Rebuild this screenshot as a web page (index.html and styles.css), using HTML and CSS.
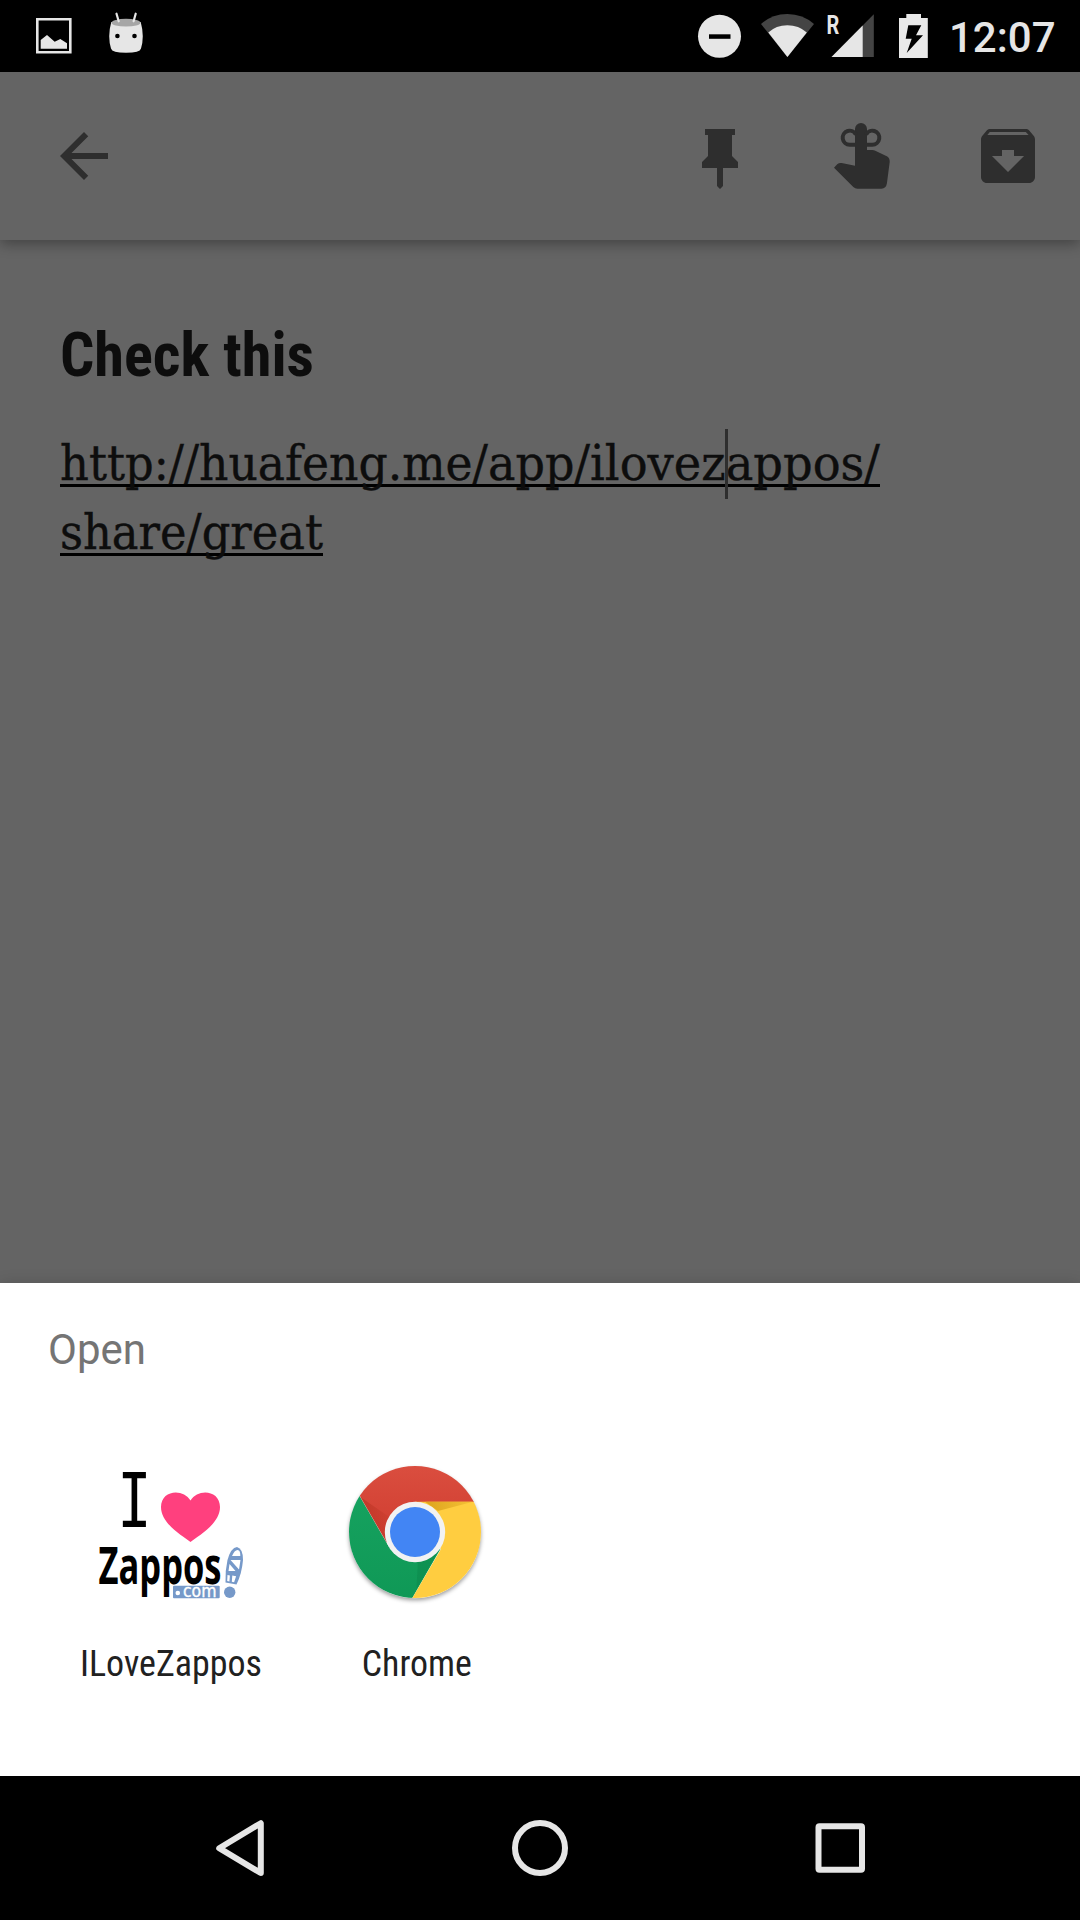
FILE: index.html
```html
<!DOCTYPE html>
<html lang="en">
<head>
<meta charset="utf-8">
<title>Open with</title>
<link rel="stylesheet" href="styles.css">
</head>
<body>
<div class="screen">
  <header class="status">
    <div class="status-left">
      <svg width="36" height="72" viewBox="36 0 36 72"><path d="M37.3 19.3h33v33h-33z" fill="none" stroke="#e6e6e6" stroke-width="2.6"/><path d="M40.7 40l6.3-5 7.7 6.7 5.6-2.7 6.7 4.3v5.4H40.7z" fill="#e6e6e6"/></svg>
      <svg width="36" height="72" viewBox="108 0 36 72"><path d="M111.3 22Q107.300 36 111 48.500Q112 52.800 126 52.800T141 48.500Q144.700 36 140.700 22z" fill="#e6e6e6"/><ellipse cx="126" cy="22.700" rx="14.500" ry="3.900" fill="#a6a6a6"/><path d="M116.500 13.700l2.200 7.600M135.700 13.700l-2.100 7.600" stroke="#e6e6e6" stroke-width="2.200" stroke-linecap="round"/><circle cx="117.400" cy="36" r="2.300"/><circle cx="134.500" cy="36" r="2.300"/></svg>
    </div>
    <div class="status-right">
      <svg width="52" height="72" viewBox="696 0 52 72"><circle cx="719.500" cy="36.300" r="21.500" fill="#e6e6e6"/><path d="M709 34.300h21.500v4.500H709z"/></svg>
      <svg width="60" height="72" viewBox="756 0 60 72"><path d="M787.400 57L761 24Q772 14 787.400 14T814 24z" fill="#444"/><path d="M787.400 57L768.300 32.600Q776 25.300 787.400 25.300T806.800 32.600z" fill="#e6e6e6"/></svg>
      <svg width="60" height="72" viewBox="824 0 60 72"><path d="M831.500 57L873.800 14.200V57z" fill="#444"/><path d="M831.500 57L862.700 25.400V57z" fill="#e6e6e6"/><text class="roaming" x="826.500" y="33.700" textLength="12.800" lengthAdjust="spacingAndGlyphs">R</text></svg>
      <svg width="44" height="72" viewBox="892 0 44 72"><path d="M899 18h7.300v-4H921v4h6.800v40H899z" fill="#e9e9e9"/><path d="M908.300 25.300h13l-5.300 10h7L906.700 53l5-14.300h-6z"/></svg>
      <time class="clock">12:07</time>
    </div>
  </header>

  <nav class="toolbar">
    <svg width="72" height="72" viewBox="0 0 24 24"><path d="M20 11H7.830l5.590-5.590L12 4l-8 8 8 8 1.410-1.410L7.830 13H20z"/></svg>
    <div class="actions">
      <svg width="72" height="72" viewBox="684 120 72 72"><path d="M705 129h30v6h-3v21l6 6v6h-15v18l-3 3-3-3v-18h-15v-6l6-6v-21h-3z"/></svg>
      <svg width="72" height="72" viewBox="828 120 72 72"><path d="M855 165.700V129a6 6 0 0 1 12 0v21h5.300q1.700 0 3 .7l12 5.900q2.600 1.700 2.400 5.400l-2.800 21.400q-.9 5-5.400 5.300h-24q-2.400 0-4.200-1.700L834 167.700l3.200-3.400q2-1.800 4.500-1.300z"/><path d="M856 144.700h-6.300a7 7 0 1 1 6.300-10M866 144.700h6.300a7 7 0 1 0-6.300-10" fill="none" stroke="#2e2e2e" stroke-width="4"/></svg>
      <svg width="72" height="72" viewBox="0 0 24 24"><path fill-rule="evenodd" d="M20.540 5.230l-1.390-1.680C18.880 3.210 18.470 3 18 3H6c-.47 0-.88.21-1.160.55L3.460 5.230C3.170 5.570 3 6.020 3 6.500V19c0 1.100.9 2 2 2h14c1.100 0 2-.9 2-2V6.500c0-.48-.17-.93-.46-1.270zM12 17.350L6.650 12H10v-2h4v2h3.350zM5.120 5l.81-1h12l.94 1z"/></svg>
    </div>
  </nav>

  <main class="note">
    <svg class="note-text" width="960" height="280" viewBox="60 310 960 280">
      <text class="note-title" x="60" y="376" textLength="254" lengthAdjust="spacingAndGlyphs">Check this</text>
      <path d="M60 484h820v3H60zM60 553h263v3H60z" fill="#000"/>
      <text class="note-link" y="480"><tspan x="60" textLength="139" lengthAdjust="spacingAndGlyphs">http://</tspan><tspan x="199" textLength="289" lengthAdjust="spacingAndGlyphs">huafeng.me/</tspan><tspan x="488" textLength="102" lengthAdjust="spacingAndGlyphs">app/</tspan><tspan x="590" textLength="290" lengthAdjust="spacingAndGlyphs">ilovezappos/</tspan></text>
      <text class="note-link" x="60" y="549" textLength="263" lengthAdjust="spacingAndGlyphs">share/great</text>
      <path d="M725 429h3v70h-3z" fill="#2e2e2e"/>
    </svg>
  </main>

  <section class="sheet">
    <h1 class="sheet-title">Open</h1>
    <div class="apps">
      <div class="app">
        <svg width="160" height="160" viewBox="91 1452 160 160">
          <text class="logo-i" transform="translate(134.500 1527) scale(.76 1)" text-anchor="middle">I</text>
          <path d="M190.500 1542C183 1536 161 1524 161 1507C161 1490 183 1488 190.500 1500.500C198 1488 220 1490 220 1507C220 1524 198 1536 190.500 1542z" fill="#ff407e"/>
          <text class="logo-name" x="98.500" y="1583.500" textLength="123" lengthAdjust="spacingAndGlyphs">Zappos</text>
          <rect x="173" y="1585.700" width="46.700" height="12.500" rx="1" fill="#7699c9"/>
          <circle cx="177.800" cy="1593" r="2.300" fill="#fff"/>
          <text class="logo-com" x="183" y="1597" textLength="33.500" lengthAdjust="spacingAndGlyphs">com</text>
          <path d="M225.500 1582.500Q225 1571 227.500 1560Q231 1547.500 237 1547Q243 1548.500 243 1560Q242 1573 236.500 1584.500z" fill="#7699c9"/>
          <path d="M232 1556q2.500-6 5.500-6t2.800 6zM230.500 1560l8.500 9.500 1.500-9.500zM229.500 1564l-1 7h7zM227.500 1575l-.3 6 2.200.4.500-6zM232.300 1575.500l-.5 6.300 2.300.4 2-6z" fill="#fff"/>
          <circle cx="229.700" cy="1592.300" r="5.700" fill="#7699c9"/>
        </svg>
        <svg class="label" width="190" height="48" viewBox="76 1640 190 48"><text x="80" y="1676" textLength="182" lengthAdjust="spacingAndGlyphs">ILoveZappos</text></svg>
      </div>
      <div class="app">
        <svg width="160" height="160" viewBox="336 1452 160 160">
          <defs>
            <clipPath id="disc"><circle cx="415" cy="1532" r="66"/></clipPath>
            <linearGradient id="red" x1="0" y1="0" x2="0" y2="1"><stop offset="0" stop-color="#db4f40"/><stop offset="1" stop-color="#cf3c2f"/></linearGradient>
            <linearGradient id="green" x1="0" y1="0" x2="0" y2="1"><stop offset="0" stop-color="#17a461"/><stop offset="1" stop-color="#0f9856"/></linearGradient>
            <linearGradient id="fold-red" x1="0" y1="0" x2="1" y2="0"><stop offset="0" stop-color="#a52714" stop-opacity=".4"/><stop offset="1" stop-color="#a52714" stop-opacity=".1"/></linearGradient>
            <linearGradient id="fold-yellow" x1="0" y1="0" x2="1" y2="0"><stop offset="0" stop-color="#dda41d"/><stop offset="1" stop-color="#f5c136"/></linearGradient>
          </defs>
          <circle class="disc-shadow" cx="415" cy="1532.500" r="65.800" fill="#fff"/>
          <g clip-path="url(#disc)">
            <path d="M345 1460h140v42H415l-28 41L345 1470z" fill="url(#red)"/>
            <path d="M345 1470L360 1496.700 389 1547 415 1532 440.500 1549 412.300 1598 410 1602h-70z" fill="url(#green)"/>
            <path d="M415 1501.800h75V1602h-79.500L412.300 1598 441 1549 415 1532z" fill="#ffcd40"/>
            <path d="M360 1496.700l29 20-3.500 25z" fill="url(#fold-red)"/>
            <path d="M425 1501.800h48L438 1511z" fill="url(#fold-yellow)"/>
            <path d="M439 1550l-21 9-1.500 30z" fill="#0a7a43" opacity=".3"/>
          </g>
          <circle cx="415" cy="1532" r="30.200" fill="#f2f2f2"/>
          <circle cx="415" cy="1532" r="25" fill="#4285f4"/>
        </svg>
        <svg class="label" width="190" height="48" viewBox="321 1640 190 48"><text x="361.800" y="1676" textLength="110" lengthAdjust="spacingAndGlyphs">Chrome</text></svg>
      </div>
    </div>
  </section>

  <footer class="navbar">
    <svg width="60" height="60" viewBox="210 1818 60 60"><path d="M260.800 1823.200v49.800L219.200 1848.200z"/></svg>
    <svg width="60" height="60" viewBox="510 1818 60 60"><circle cx="540" cy="1848" r="25"/></svg>
    <svg width="60" height="60" viewBox="810 1818 60 60"><rect x="818.500" y="1826.300" width="43.500" height="43.500" rx="1"/></svg>
  </footer>
</div>
</body>
</html>
```
FILE: styles.css
```css
body {
  margin: 0;
  background: #000;
  font-family: Roboto, "Open Sans", sans-serif;
}

svg {
  display: block;
  flex: none;
}

.screen {
  display: flex;
  flex-direction: column;
  width: 1080px;
  height: 1920px;
  overflow: hidden;
  background: #646464;
}

.status {
  display: flex;
  flex: none;
  justify-content: space-between;
  height: 72px;
  padding: 0 20px 0 36px;
  background: #000;
}

.status-left {
  display: flex;
  gap: 36px;
}

.status-right {
  display: flex;
  gap: 8px;
}

.roaming {
  font-size: 25.5px;
  font-weight: 700;
  fill: #e6e6e6;
}

.clock {
  width: 111px;
  padding-left: 5px;
  color: #e6e6e6;
  font-size: 42px;
  font-weight: 500;
  line-height: 75px;
}

.toolbar {
  display: flex;
  flex: none;
  align-items: center;
  justify-content: space-between;
  box-sizing: border-box;
  height: 168px;
  padding: 0 36px 0 48px;
  fill: #2e2e2e;
  box-shadow: 0 4px 13px rgba(0, 0, 0, 0.33);
}

.actions {
  display: flex;
  gap: 72px;
}

.note {
  flex: 1;
  padding: 70px 60px 0;
}

.note-title {
  font-size: 60.5px;
  font-weight: 700;
  font-stretch: condensed;
  fill: #0d0d0d;
}

.note-link {
  font-family: "Roboto Slab", "DejaVu Serif", serif;
  font-size: 49px;
  fill: #0d0d0d;
  stroke: #0d0d0d;
  stroke-width: 0.4px;
}

.sheet {
  flex: none;
  box-sizing: border-box;
  height: 493px;
  padding: 42px 48px 0;
  background: #fff;
  box-shadow: 0 0 14px rgba(0, 0, 0, 0.14);
}

.sheet-title {
  margin: 0;
  color: #757575;
  font-size: 42px;
  font-weight: 400;
  line-height: 50px;
}

.apps {
  display: flex;
  padding-top: 77px;
}

.app {
  display: flex;
  flex-direction: column;
  align-items: center;
  gap: 28px;
  width: 245px;
}

.label {
  font-size: 36px;
  font-stretch: condensed;
  fill: #212121;
}

.logo-i {
  font-family: "DejaVu Sans Mono", monospace;
  font-size: 75px;
}

.logo-name {
  font-family: "Open Sans", sans-serif;
  font-size: 52px;
  font-weight: 700;
}

.logo-com {
  font-family: "DejaVu Sans", sans-serif;
  font-size: 18px;
  fill: #fff;
  stroke: #fff;
  stroke-width: 0.4px;
}

.disc-shadow {
  filter: drop-shadow(0 2px 2px rgba(0, 0, 0, 0.4));
}

.navbar {
  display: flex;
  flex: none;
  align-items: center;
  justify-content: center;
  gap: 240px;
  height: 144px;
  background: #000;
  fill: none;
  stroke: #e6e6e6;
  stroke-width: 6px;
  stroke-linejoin: round;
}
```
